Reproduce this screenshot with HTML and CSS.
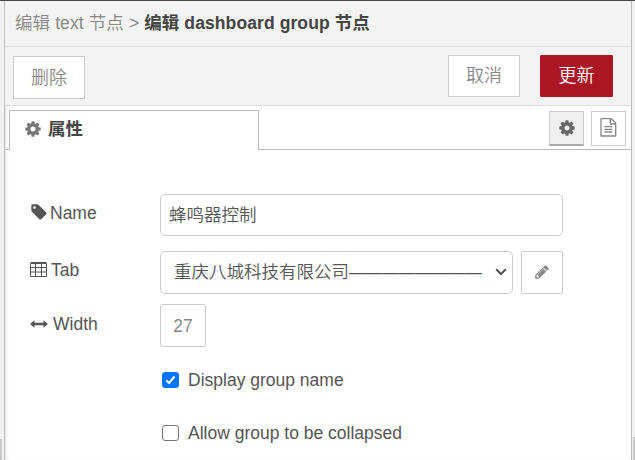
FILE: index.html
```html
<!DOCTYPE html>
<html lang="zh-CN">
<head>
<meta charset="utf-8">
<title>编辑 dashboard group 节点</title>
<link rel="stylesheet" href="styles.css">
</head>
<body>
<svg class="defs" aria-hidden="true">
  <symbol id="gear" viewBox="0 0 1792 1792"><path d="M1152 896q0-106-75-181t-181-75-181 75-75 181 75 181 181 75 181-75 75-181zm512-109v222q0 12-8 23t-20 13l-185 28q-19 54-39 91 35 50 107 138 10 12 10 25t-9 23q-27 37-99 108t-94 71q-12 0-26-9l-138-108q-44 23-91 38-16 136-29 186-7 28-36 28h-222q-14 0-24.500-8.500t-11.500-21.500l-28-184q-49-16-90-37l-141 107q-10 9-25 9-14 0-25-11-126-114-165-168-7-10-7-23 0-12 8-23 15-21 51-66.500t54-70.500q-27-50-41-99l-183-27q-13-2-21-12.500t-8-23.500v-222q0-12 8-23t19-13l186-28q14-46 39-92-40-57-107-138-10-12-10-24 0-10 9-23 26-36 98.500-107.500t94.500-71.500q13 0 26 10l138 107q44-23 91-38 16-136 29-186 7-28 36-28h222q14 0 24.500 8.500t11.500 21.500l28 184q49 16 90 37l142-107q9-9 24-9 13 0 25 10 129 119 165 170 7 8 7 22 0 12-8 23-15 21-51 66.500t-54 70.500q26 50 41 98l183 28q13 2 21 12.500t8 23.500z"/></symbol>
</svg>
<div class="screen">
  <div class="gutter gutter-left"></div>
  <main class="tray">
    <header class="crumbs">编辑 text 节点 &gt; <b>编辑 dashboard group 节点</b></header>
    <div class="toolbar">
      <button class="btn delete">删除</button>
      <button class="btn cancel">取消</button>
      <button class="btn primary">更新</button>
    </div>
    <div class="tabs">
      <div class="tab"><svg class="icon"><use href="#gear"/></svg><b>属性</b></div>
      <div class="tab-actions">
        <button class="square selected"><svg class="icon"><use href="#gear"/></svg></button>
        <button class="square"><svg class="icon doc" viewBox="0 0 1792 1792"><path d="M1596 380q28 28 48 76t20 88v1152q0 40-28 68t-68 28h-1344q-40 0-68-28t-28-68v-1600q0-40 28-68t68-28h896q40 0 88 20t76 48zm-444-244v376h376q-10-29-22-41l-313-313q-12-12-41-22zm384 1528v-1024h-416q-40 0-68-28t-28-68v-416h-768v1536h1280zm-1024-864q0-14 9-23t23-9h704q14 0 23 9t9 23v64q0 14-9 23t-23 9h-704q-14 0-23-9t-9-23v-64zm736 224q14 0 23 9t9 23v64q0 14-9 23t-23 9h-704q-14 0-23-9t-9-23v-64q0-14 9-23t23-9h704zm0 256q14 0 23 9t9 23v64q0 14-9 23t-23 9h-704q-14 0-23-9t-9-23v-64q0-14 9-23t23-9h704z"/></svg></button>
      </div>
    </div>
    <div class="form">
      <div class="row row-name">
        <div class="label"><svg class="icon tag" viewBox="0 0 1792 1792"><path d="M576 448q0-53-37.500-90.500t-90.500-37.500-90.500 37.500-37.500 90.500 37.500 90.500 90.500 37.500 90.500-37.500 37.500-90.500zm1067 576q0 53-37 90l-491 492q-39 37-91 37-53 0-90-37l-715-716q-38-37-64.500-101t-26.500-117v-416q0-52 38-90t90-38h416q53 0 117 26.500t102 64.500l715 714q37 39 37 91z"/></svg><span>Name</span></div>
        <div class="field name">蜂鸣器控制</div>
      </div>
      <div class="row row-tab">
        <div class="label"><svg class="icon table" viewBox="0 0 17 15"><path d="M.5 1.500h16v13H.5zM.5.500h16M.5 5.500h16M.5 10h16M5.500 1v13M11.500 1v13"/></svg><span>Tab</span></div>
        <div class="field select"><span class="value">重庆八城科技有限公司<span class="dashes">————————</span></span><svg class="chevron" viewBox="0 0 12 8"><path d="M1.200 1.200 6 6l4.800-4.800"/></svg></div>
        <button class="edit"><svg class="icon pencil" viewBox="0 0 1792 1792"><path d="M491 1536l91-91-235-235-91 91v107h128v128h107zm523-928q0-22-22-22-10 0-17 7l-542 542q-7 7-7 17 0 22 22 22 10 0 17-7l542-542q7-7 7-17zm-54-192l416 416-832 832h-416v-416zm683 96q0 53-37 90l-166 166-416-416 166-165q36-38 90-38 53 0 91 38l235 234q37 39 37 91z"/></svg></button>
      </div>
      <div class="row row-width">
        <div class="label"><svg class="icon arrows" viewBox="0 0 18 18"><path d="M0 9 4.500 5.200V7.800h9V5.200L18 9l-4.500 3.800V10.200h-9v2.600z"/></svg><span>Width</span></div>
        <button class="size">27</button>
      </div>
      <div class="check first"><span class="box on"><svg viewBox="0 0 16 16"><path d="m3.300 8.500 3 3 6.300-7.500"/></svg></span><span>Display group name</span></div>
      <div class="check second"><span class="box"></span><span>Allow group to be collapsed</span></div>
    </div>
  </main>
  <div class="gutter gutter-right"></div>
</div>
</body>
</html>
```
FILE: styles.css
```css
* { box-sizing: border-box; }
body { margin: 0; overflow: hidden; }
body, button {
  font-family: "Liberation Sans", "Noto Sans CJK SC", sans-serif;
  font-size: 17.5px;
  font-weight: 350;
  line-height: 26px;
}
button { margin: 0; padding: 0; color: #888; background: #fff; border: 1px solid #ccc; }
b { font-weight: 700; }
.defs { display: none; }
.icon { width: 18px; height: 18px; fill: currentColor; flex: none; display: block; }

.screen {
  display: grid;
  grid-template-columns: 5px 626px 4px;
  height: 460px;
  border-top: 1px solid #4a4648;
  background: #fff;
}
.gutter { background: #f1f1f1; display: flex; align-items: flex-end; }
.gutter::before { content: ""; background: #c8c8c8; }
.gutter-left { border-right: 1px solid #c0c0c0; }
.gutter-left::before { width: 2px; height: 21px; }
.gutter-right { border-left: 1px solid #bbb; justify-content: flex-end; }
.gutter-right::before { width: 2px; height: 23px; }

.tray { color: #555; background: #fff; box-shadow: inset 3px 0 4px -3px #ccc; }
.crumbs {
  height: 46px;
  padding: 9px 0 0 10px;
  color: #888;
  background: #f3f3f3;
  border-bottom: 1px solid #ddd;
  letter-spacing: .1px;
  white-space: pre;
}
.crumbs b { color: #444; }
.toolbar {
  display: flex;
  height: 59px;
  padding: 8px 18px 0 8px;
  background: #f3f3f3;
  border-bottom: 1px solid #ddd;
}
.btn { width: 72px; height: 42px; font-size: 18px; }
.delete { margin: 1px auto 0 0; height: 43px; }
.cancel { margin-right: 20px; }
.primary { width: 73px; background: #ad1625; border-color: #ad1625; color: #fff; border-radius: 1px; }

.tabs {
  display: flex;
  justify-content: space-between;
  height: 44px;
  padding: 4px 5px 0 4px;
  background: linear-gradient(#bbb, #bbb) bottom / 100% 1px no-repeat;
}
.tab {
  display: flex;
  align-items: center;
  gap: 6px;
  width: 250px;
  height: 40px;
  padding: 0 0 3px 14px;
  color: #444;
  background: #fff;
  border: 1px solid #bbb;
  border-bottom: 0;
}
.tab .icon { fill: #777; }
.tab-actions { display: flex; gap: 7px; padding-top: 1px; }
.square { display: flex; align-items: center; justify-content: center; width: 35px; height: 35px; }
.selected { background: #efefef; color: #666; border-bottom: 2px solid #aaa; }
.doc { width: 18.7px; height: 18.7px; margin-bottom: 2px; }

.form { padding: 44px 0 0 25px; }
.row { display: flex; }
.label { display: flex; width: 130px; padding-top: 6px; }
.label .icon { margin-top: 4px; }
.label .tag { margin: 3px 2px 0 0; }
.label .table { width: 17px; height: 15px; margin: 5px 4px 0 0; fill: none; stroke: currentColor; stroke-width: 1; }
.label .arrows { width: 18px; margin: 4px 5px 0 0; }
.field { border: 1px solid #ccc; border-radius: 5px; color: #555; }
.name { width: 403px; height: 42px; padding: 7px 8px; }
.row-tab { margin-top: 15px; }
.select { display: flex; align-items: center; width: 353px; height: 43px; padding: 0 5px 1px 13px; }
.value { white-space: nowrap; }
.dashes { font-size: 16.6px; }
.chevron { width: 12px; height: 8px; margin-left: auto; fill: none; stroke: #555; stroke-width: 2.200; }
.edit { display: flex; align-items: center; justify-content: center; width: 42px; height: 43px; margin-left: 8px; border-radius: 2px; }
.pencil { width: 16px; height: 16px; margin-bottom: 1px; }
.row-width { margin-top: 10px; }
.row-width .label { padding-top: 7px; }
.size { width: 46px; height: 43px; padding-top: 1px; border-radius: 2px; }
.check { display: flex; align-items: center; gap: 9px; height: 26px; margin-left: 132px; }
.first { margin-top: 20px; }
.second { margin-top: 27px; }
.box { width: 17px; height: 16px; border: 1px solid #767676; border-radius: 3px; }
.on { background: #0075ff; border-color: #0075ff; }
.box svg { display: block; width: 15px; height: 14px; fill: none; stroke: #fff; stroke-width: 2.400; }
```
